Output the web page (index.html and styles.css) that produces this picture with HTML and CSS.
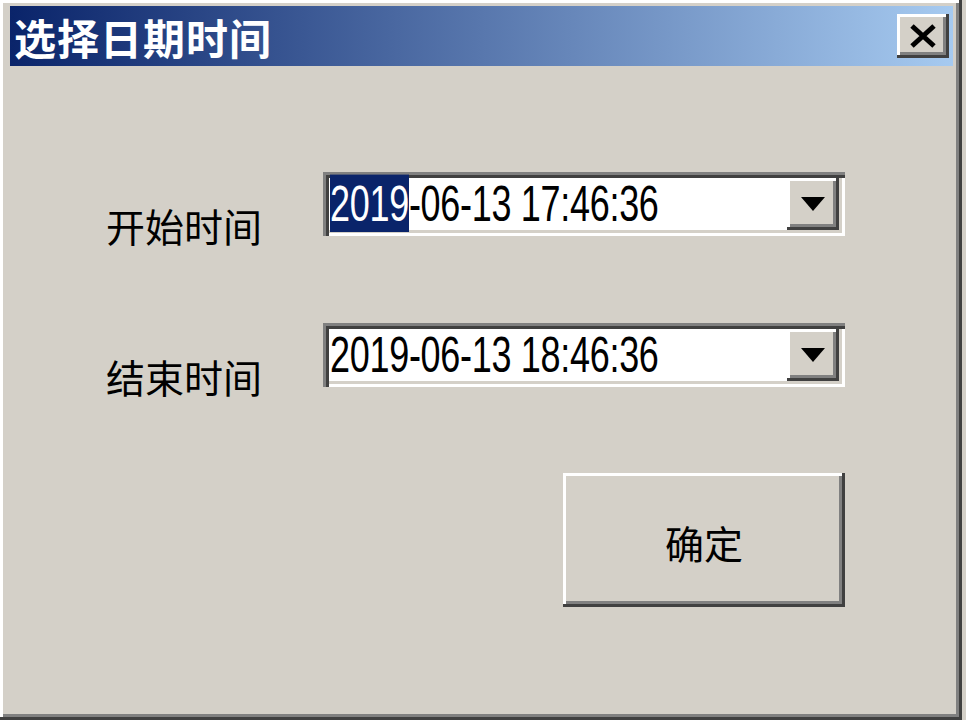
FILE: index.html
```html
<!DOCTYPE html>
<html lang="zh-CN">
<head>
  <meta charset="UTF-8" />
  <title>选择日期时间</title>
  <link rel="stylesheet" href="styles.css">
</head>
<body>
  <div class="window" role="dialog" aria-labelledby="dlgTitle">
    <div class="title-bar">
      <div id="dlgTitle" class="title-text">选择日期时间</div>
      <button class="close-btn" title="关闭" aria-label="关闭">
        <svg width="28" height="24" viewBox="0 0 28 24">
          <path d="M3 2 L25 22 M25 2 L3 22" stroke="#000" stroke-width="5" fill="none"/>
        </svg>
      </button>
    </div>

    <div class="content">
      <label class="field-label" for="inicio">开始时间</label>
      <div class="combo" id="inicio">
        <div class="combo-text"><span class="sel">2019</span>-06-13 17:46:36</div>
        <div class="drop-btn">
          <svg width="24" height="14" viewBox="0 0 24 14"><polygon points="0,0 24,0 12,14" fill="#000"/></svg>
        </div>
      </div>

      <label class="field-label" for="fim">结束时间</label>
      <div class="combo" id="fim">
        <div class="combo-text">2019-06-13 18:46:36</div>
        <div class="drop-btn">
          <svg width="24" height="14" viewBox="0 0 24 14"><polygon points="0,0 24,0 12,14" fill="#000"/></svg>
        </div>
      </div>

      <div class="actions">
        <button class="ok-btn">确定</button>
      </div>
    </div>
  </div>
</body>
</html>
```

FILE: styles.css
```css
body {
  margin: 0;
  background: #d4d0c8;
  font-family: "Noto Sans CJK SC", "Liberation Sans", sans-serif;
}
.window {
  box-sizing: border-box;
  width: 962px;
  height: 720px;
  background: #d4d0c8;
  padding: 6px 9px 9px 10px;
  box-shadow: inset -3px -3px #404040, inset 3px 3px #ffffff, inset -6px -6px #808080;
}
.title-bar {
  height: 60px;
  background: linear-gradient(to right, #0a246a, #a6caf0);
  display: flex;
  justify-content: space-between;
  align-items: center;
  padding: 0 4px 0 4px;
}
.title-text {
  color: #fff;
  font-weight: bold;
  font-size: 42px;
  line-height: 48px;
  letter-spacing: 1px;
  margin-top: 2px;
}
.close-btn {
  box-sizing: border-box;
  width: 52px;
  height: 44px;
  padding: 0;
  border: none;
  background: #d4d0c8;
  display: flex;
  align-items: center;
  justify-content: center;
  box-shadow: inset -3px -3px #404040, inset 3px 3px #ffffff, inset -6px -6px #808080;
}
.content {
  display: grid;
  grid-template-columns: 217px 522px;
  row-gap: 87px;
  padding: 106px 0 0 96px;
  align-items: start;
}
.field-label {
  font-size: 39px;
  line-height: 46px;
  align-self: end;
  margin-bottom: -12px;
  color: #000;
}
.combo {
  box-sizing: border-box;
  height: 64px;
  background: #fff;
  display: flex;
  align-items: stretch;
  padding: 6px;
  box-shadow: inset 3px 3px #808080, inset 6px 6px #404040, inset -3px -3px #ffffff, inset -6px -6px #d4d0c8;
}
.combo-text {
  flex: 1;
  font-family: "Liberation Sans", Arial, sans-serif;
  font-size: 36px;
  line-height: 28px;
  align-self: center;
  transform: scaleY(1.4);
  letter-spacing: -0.3px;
  color: #000;
  padding-left: 1px;
}
.sel {
  background: #0a246a;
  color: #fff;
}
.drop-btn {
  box-sizing: border-box;
  width: 52px;
  background: #d4d0c8;
  display: flex;
  align-items: center;
  justify-content: center;
  box-shadow: inset -3px -3px #404040, inset 3px 3px #ffffff, inset -6px -6px #808080;
}
.actions {
  grid-column: 2;
  display: flex;
  justify-content: flex-end;
  margin-top: -1px;
}
.ok-btn {
  box-sizing: border-box;
  width: 282px;
  height: 134px;
  border: none;
  background: #d4d0c8;
  font-family: "Noto Sans CJK SC", sans-serif;
  font-size: 39px;
  color: #000;
  padding: 4px 0 0;
  box-shadow: inset -3px -3px #404040, inset 3px 3px #ffffff, inset -6px -6px #808080;
}
```
